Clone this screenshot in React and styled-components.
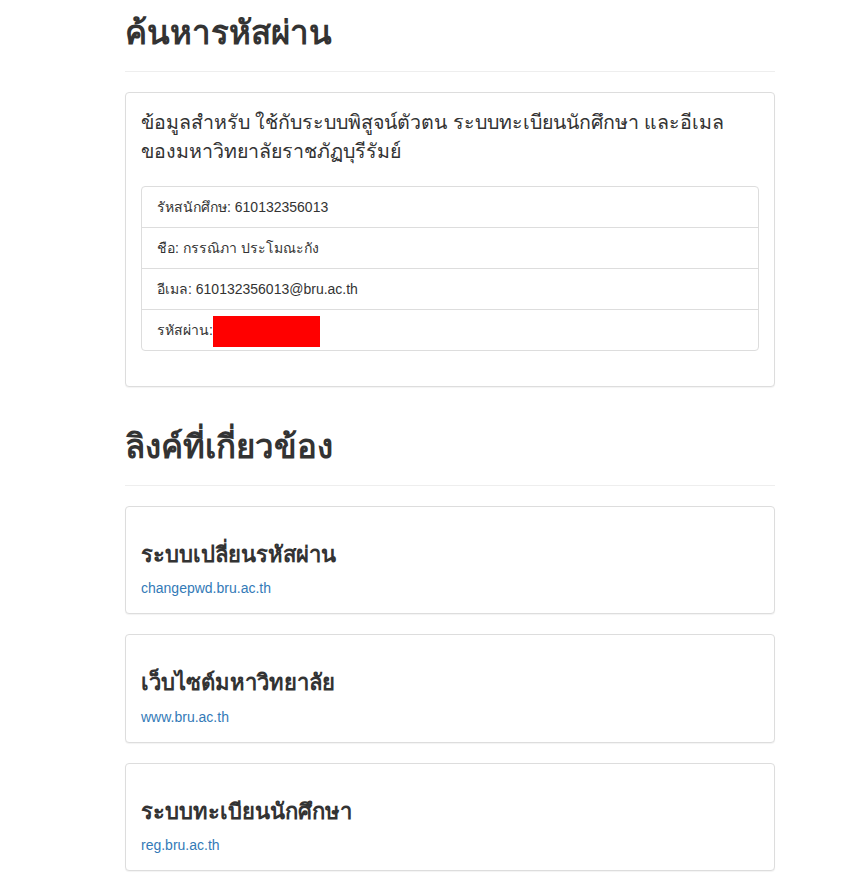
import React from "react";
import styled, { createGlobalStyle } from "styled-components";

const GlobalStyle = createGlobalStyle`
  html, body {
    margin: 0;
    padding: 0;
    background: #fff;
  }
  body {
    font-family: "Liberation Sans", Arial, sans-serif;
    font-size: 14px;
    line-height: 1.42857;
    color: #333;
  }
`;

const student = [
  { label: "รัหสนักศึกษ", value: "610132356013" },
  { label: "ชือ", value: "กรรณิภา ประโมณะกัง" },
  { label: "อีเมล", value: "610132356013@bru.ac.th" },
];

const links = [
  { title: "ระบบเปลี่ยนรหัสผ่าน", url: "changepwd.bru.ac.th" },
  { title: "เว็บไซต์มหาวิทยาลัย", url: "www.bru.ac.th" },
  { title: "ระบบทะเบียนนักศึกษา", url: "reg.bru.ac.th" },
];

const App = () => {
  return (
    <>
      <GlobalStyle />
      <Container>
        <PageHeader $first>
          <Title>ค้นหารหัสผ่าน</Title>
        </PageHeader>
        <Panel>
          <Lead>
            <Line>ข้อมูลสำหรับ ใช้กับระบบพิสูจน์ตัวตน ระบบทะเบียนนักศึกษา และอีเมล</Line>
            <br />
            <Line>ของมหาวิทยาลัยราชภัฏบุรีรัมย์</Line>
          </Lead>
          <ListGroup>
            {student.map((item) => (
              <ListItem key={item.label}>
                {item.label}: {item.value}
              </ListItem>
            ))}
            <ListItem>
              รหัสผ่าน:<Hidden />
            </ListItem>
          </ListGroup>
        </Panel>

        <PageHeader>
          <Title>ลิงค์ที่เกี่ยวข้อง</Title>
        </PageHeader>
        {links.map((link) => (
          <LinkPanel key={link.url}>
            <LinkTitle>{link.title}</LinkTitle>
            <LinkUrl href="#">{link.url}</LinkUrl>
          </LinkPanel>
        ))}
      </Container>
    </>
  );
};

export default App;

const Container = styled.div`
  width: 650px;
  margin-left: 125px;
  padding-top: 13px;
  padding-bottom: 20px;
`;

const PageHeader = styled.div`
  margin-top: ${(p) => (p.$first ? "0" : "40px")};
  margin-bottom: 20px;
  padding-bottom: 9px;
  border-bottom: 1px solid #eee;
`;

const Title = styled.h1`
  margin: 0 0 10px;
  font-size: 33px;
  font-weight: 700;
  line-height: 39px;
  color: #333;
`;

const Panel = styled.div`
  padding: 15px;
  margin-bottom: 20px;
  background: #fff;
  border: 1px solid #ddd;
  border-radius: 4px;
  box-shadow: 0 1px 1px rgba(0, 0, 0, 0.05);
`;

const Lead = styled.p`
  margin: 0 0 19px;
  font-size: 19.6px;
  font-weight: 400;
  line-height: 29.4px;
`;

const Line = styled.span`
  white-space: nowrap;
`;

const ListGroup = styled.ul`
  margin: 0 0 20px;
  padding: 0;
  list-style: none;
`;

const ListItem = styled.li`
  padding: 10px 15px;
  margin-bottom: -1px;
  border: 1px solid #ddd;
  line-height: 20px;

  &:first-child {
    border-top-left-radius: 4px;
    border-top-right-radius: 4px;
  }
  &:last-child {
    margin-bottom: 0;
    border-bottom-left-radius: 4px;
    border-bottom-right-radius: 4px;
  }
`;

const Hidden = styled.span`
  display: inline-block;
  width: 107px;
  height: 31px;
  margin: -4px 0 -7px 0;
  vertical-align: top;
  background: #f00;
`;

const LinkPanel = styled(Panel)`
  padding-top: 35px;
`;

const LinkTitle = styled.h3`
  margin: 0 0 10px;
  font-size: 22px;
  font-weight: 700;
  line-height: 26.4px;
  color: #333;
`;

const LinkUrl = styled.a`
  display: block;
  line-height: 20px;
  color: #337ab7;
  text-decoration: none;
`;
